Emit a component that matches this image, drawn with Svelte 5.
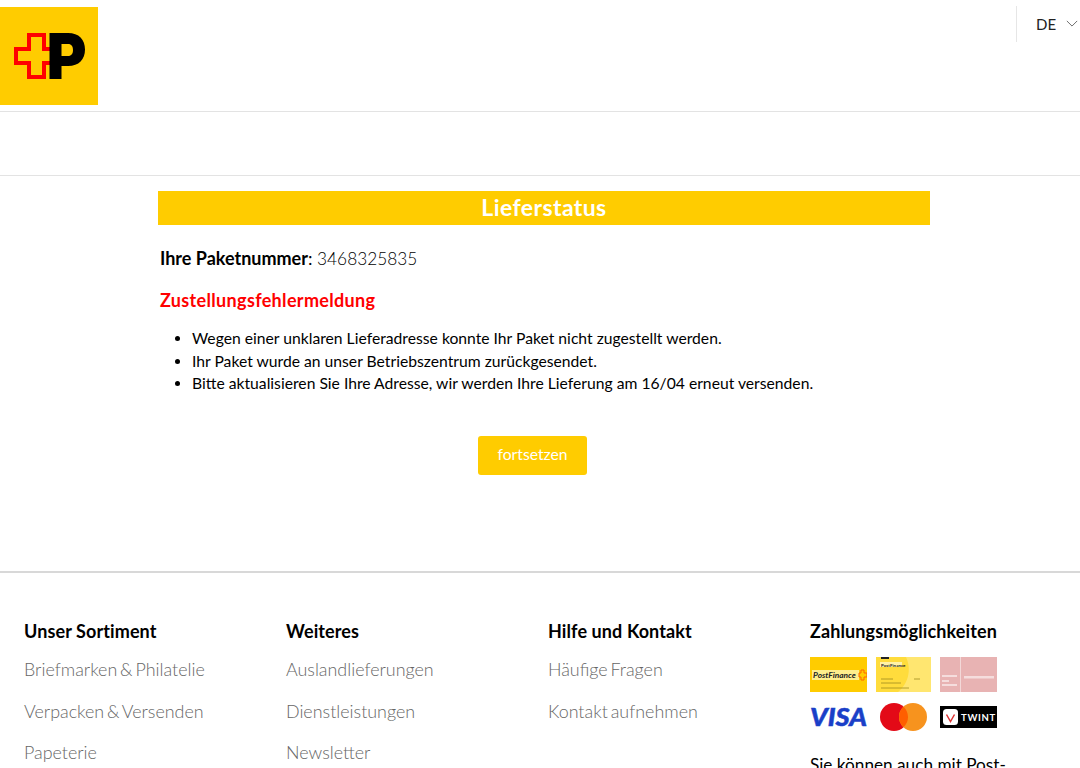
<script>
  const columns = [
    { title: 'Unser Sortiment', links: ['Briefmarken & Philatelie', 'Verpacken & Versenden', 'Papeterie'] },
    { title: 'Weiteres', links: ['Auslandlieferungen', 'Dienstleistungen', 'Newsletter'] },
    { title: 'Hilfe und Kontakt', links: ['Häufige Fragen', 'Kontakt aufnehmen'] }
  ];
</script>

<div class="page">
  <header class="top">
    <svg class="logo" viewBox="0 0 98 98" aria-label="Post">
      <rect width="98" height="98" fill="#fc0" />
      <path d="M50 42H44V28H29V42H16V56H29V70H44V56H50" fill="none" stroke="#f00" stroke-width="4" />
      <path d="M49.500 26H68c11 0 17 6.500 17 16.500S79 59 68 59h-6.500v13H49.500zM61.500 37v12H68c3.500 0 5-2.500 5-6s-1.500-6-5-6z" fill="#000" fill-rule="evenodd" />
    </svg>
    <div class="lang">
      <span>DE</span>
      <svg viewBox="0 0 14 8" class="chev"><path d="M1 1l6 6 6-6" fill="none" stroke="#555" stroke-width="1" /></svg>
    </div>
  </header>
  <div class="nav"></div>

  <main>
    <h1>Lieferstatus</h1>
    <p class="num"><b>Ihre Paketnummer</b>: <span>3468325835</span></p>
    <h2>Zustellungsfehlermeldung</h2>
    <ul>
      <li>Wegen einer unklaren Lieferadresse konnte Ihr Paket nicht zugestellt werden.</li>
      <li>Ihr Paket wurde an unser Betriebszentrum zurückgesendet.</li>
      <li>Bitte aktualisieren Sie Ihre Adresse, wir werden Ihre Lieferung am 16/04 erneut versenden.</li>
    </ul>
    <div class="action"><button>fortsetzen</button></div>
  </main>

  <footer>
    {#each columns as col}
      <section>
        <h3>{col.title}</h3>
        {#each col.links as link}
          <a href="#top">{link}</a>
        {/each}
      </section>
    {/each}
    <section>
      <h3>Zahlungsmöglichkeiten</h3>
      <div class="pay">
        <svg viewBox="0 0 57 35">
          <rect width="57" height="35" fill="#fc0" />
          <rect x="2" y="13" width="47" height="10" fill="#ffee8c" />
          <text x="3" y="20.500" font-size="8.300" font-style="italic" font-weight="700" font-family="Lato" fill="#222">PostFinance</text>
          <path d="M51 13h3v3h3v4h-3v3h-3v-3h-2v-4h2z" fill="none" stroke="#f60" />
        </svg>
        <svg viewBox="0 0 55 35">
          <rect width="55" height="35" fill="#ffdc3c" />
          <path d="M30 0h25v35H22c10-8 14-22 8-35z" fill="#ffe670" />
          <rect x="5" y="0" width="8" height="2" fill="#222" />
          <rect x="4" y="5" width="22" height="5" fill="#fff2a8" />
          <text x="5" y="9.500" font-size="4.500" font-weight="700" font-family="Lato" fill="#222">PostFinance</text>
          <path d="M5 22h12M5 26h20M5 31h28M38 22h6" stroke="#a08a20" stroke-width=".8" />
        </svg>
        <svg viewBox="0 0 57 35">
          <rect width="57" height="35" fill="#e8b3b3" />
          <rect x="20" width="1" height="35" fill="#f3d8d8" />
          <rect x="2" y="18" width="15" height="2" fill="#f5dddd" />
          <rect x="2" y="23" width="7" height="2" fill="#f5dddd" />
          <rect x="2" y="27" width="15" height="2" fill="#f5dddd" />
          <rect x="24" y="19" width="30" height="2.500" fill="#f5dddd" />
        </svg>
        <svg viewBox="0 0 57 28" class="visa">
          <text x="0" y="23" font-size="25" font-style="italic" font-weight="900" font-family="Lato" fill="#1a3fc8" stroke="#1a3fc8" stroke-width=".5" textLength="57" lengthAdjust="spacingAndGlyphs">VISA</text>
        </svg>
        <svg viewBox="0 0 47 28" class="mc">
          <circle cx="14" cy="14" r="14" fill="#e30a17" />
          <circle cx="33" cy="14" r="14" fill="#f7931e" />
          <path d="M23.500 3.700a14 14 0 0 1 0 20.600 14 14 0 0 1 0-20.600z" fill="#ff5f00" />
        </svg>
        <svg viewBox="0 0 57 22" class="twint">
          <rect width="57" height="22" fill="#000" />
          <rect x="3" y="3" width="15" height="16" rx="3.500" fill="#fff" />
          <path d="M6.500 8.500l4 7 4-7" fill="none" stroke="#d33" stroke-width="1.500" />
          <text x="21" y="15" font-size="9.500" font-weight="700" font-family="Lato" letter-spacing=".7" fill="#fff">TWINT</text>
        </svg>
      </div>
      <p class="note">Sie können auch mit Post-</p>
    </section>
  </footer>
</div>

<style>
  :global(body) {
    margin: 0;
    background: #fff;
    overflow: hidden;
  }
  .page {
    font-family: Lato, "Noto Sans", sans-serif;
    color: #000;
    height: 768px;
    overflow: hidden;
  }
  .top {
    height: 111px;
    border-bottom: 1px solid #e3e3e3;
    display: flex;
    justify-content: space-between;
    align-items: flex-start;
  }
  .logo {
    width: 98px;
    height: 98px;
    margin-top: 7px;
    display: block;
  }
  .lang {
    margin-top: 6px;
    height: 36px;
    width: 64px;
    box-sizing: border-box;
    border-left: 1px solid #e6e6e6;
    padding: 0 0 1px 19px;
    display: flex;
    align-items: center;
    gap: 10px;
    font-size: 15px;
    color: #222;
  }
  .chev {
    width: 12px;
    height: 7px;
    flex: none;
  }
  .nav {
    height: 63px;
    border-bottom: 1px solid #e3e3e3;
  }
  main {
    width: 772px;
    margin-left: 158px;
    height: 380px;
    padding-top: 15px;
  }
  h1 {
    margin: 0;
    height: 34px;
    background: #fc0;
    color: #fff;
    font-size: 23px;
    font-weight: 700;
    letter-spacing: .4px;
    line-height: 33px;
    text-align: center;
  }
  .num {
    margin: 21px 0 0 2px;
    font-size: 18px;
    line-height: 24px;
  }
  .num b {
    font-weight: 700;
  }
  .num span {
    font-size: 17.300px;
    font-weight: 300;
  }
  h2 {
    margin: 17px 0 0 2px;
    color: #f00;
    font-size: 18px;
    letter-spacing: .33px;
    line-height: 24px;
    font-weight: 700;
  }
  ul {
    margin: 15px 0 0 2px;
    padding-left: 32px;
    font-size: 15.700px;
    line-height: 22.500px;
  }
  .action {
    margin-top: 41px;
    padding-left: 320px;
  }
  button {
    width: 109px;
    height: 39px;
    background: #fc0;
    border: 0;
    border-radius: 3px;
    color: #fff;
    font: 15.700px Lato, sans-serif;
    padding: 0 0 3px;
  }
  footer {
    border-top: 2px solid #d8d8d8;
    padding: 46px 0 0 24px;
    display: grid;
    grid-template-columns: repeat(4, 262px);
  }
  h3 {
    margin: 0;
    font-size: 18px;
    font-weight: 700;
    letter-spacing: .1px;
    line-height: 24px;
  }
  a {
    display: block;
    color: #666;
    text-decoration: none;
    font-size: 17.900px;
    word-spacing: -2px;
    font-weight: 300;
    line-height: 24px;
    margin-top: 17.500px;
  }
  h3 + a {
    margin-top: 14px;
  }
  .pay {
    display: grid;
    grid-template-columns: 57px 55px 57px;
    column-gap: 9px;
    row-gap: 11px;
    margin-top: 14px;
    align-items: center;
  }
  .pay svg {
    display: block;
    width: 100%;
  }
  .pay .mc {
    width: 47px;
    margin-left: 4px;
  }
  .note {
    margin: 22px 0 0;
    font-size: 17.200px;
    line-height: 24px;
  }
</style>
